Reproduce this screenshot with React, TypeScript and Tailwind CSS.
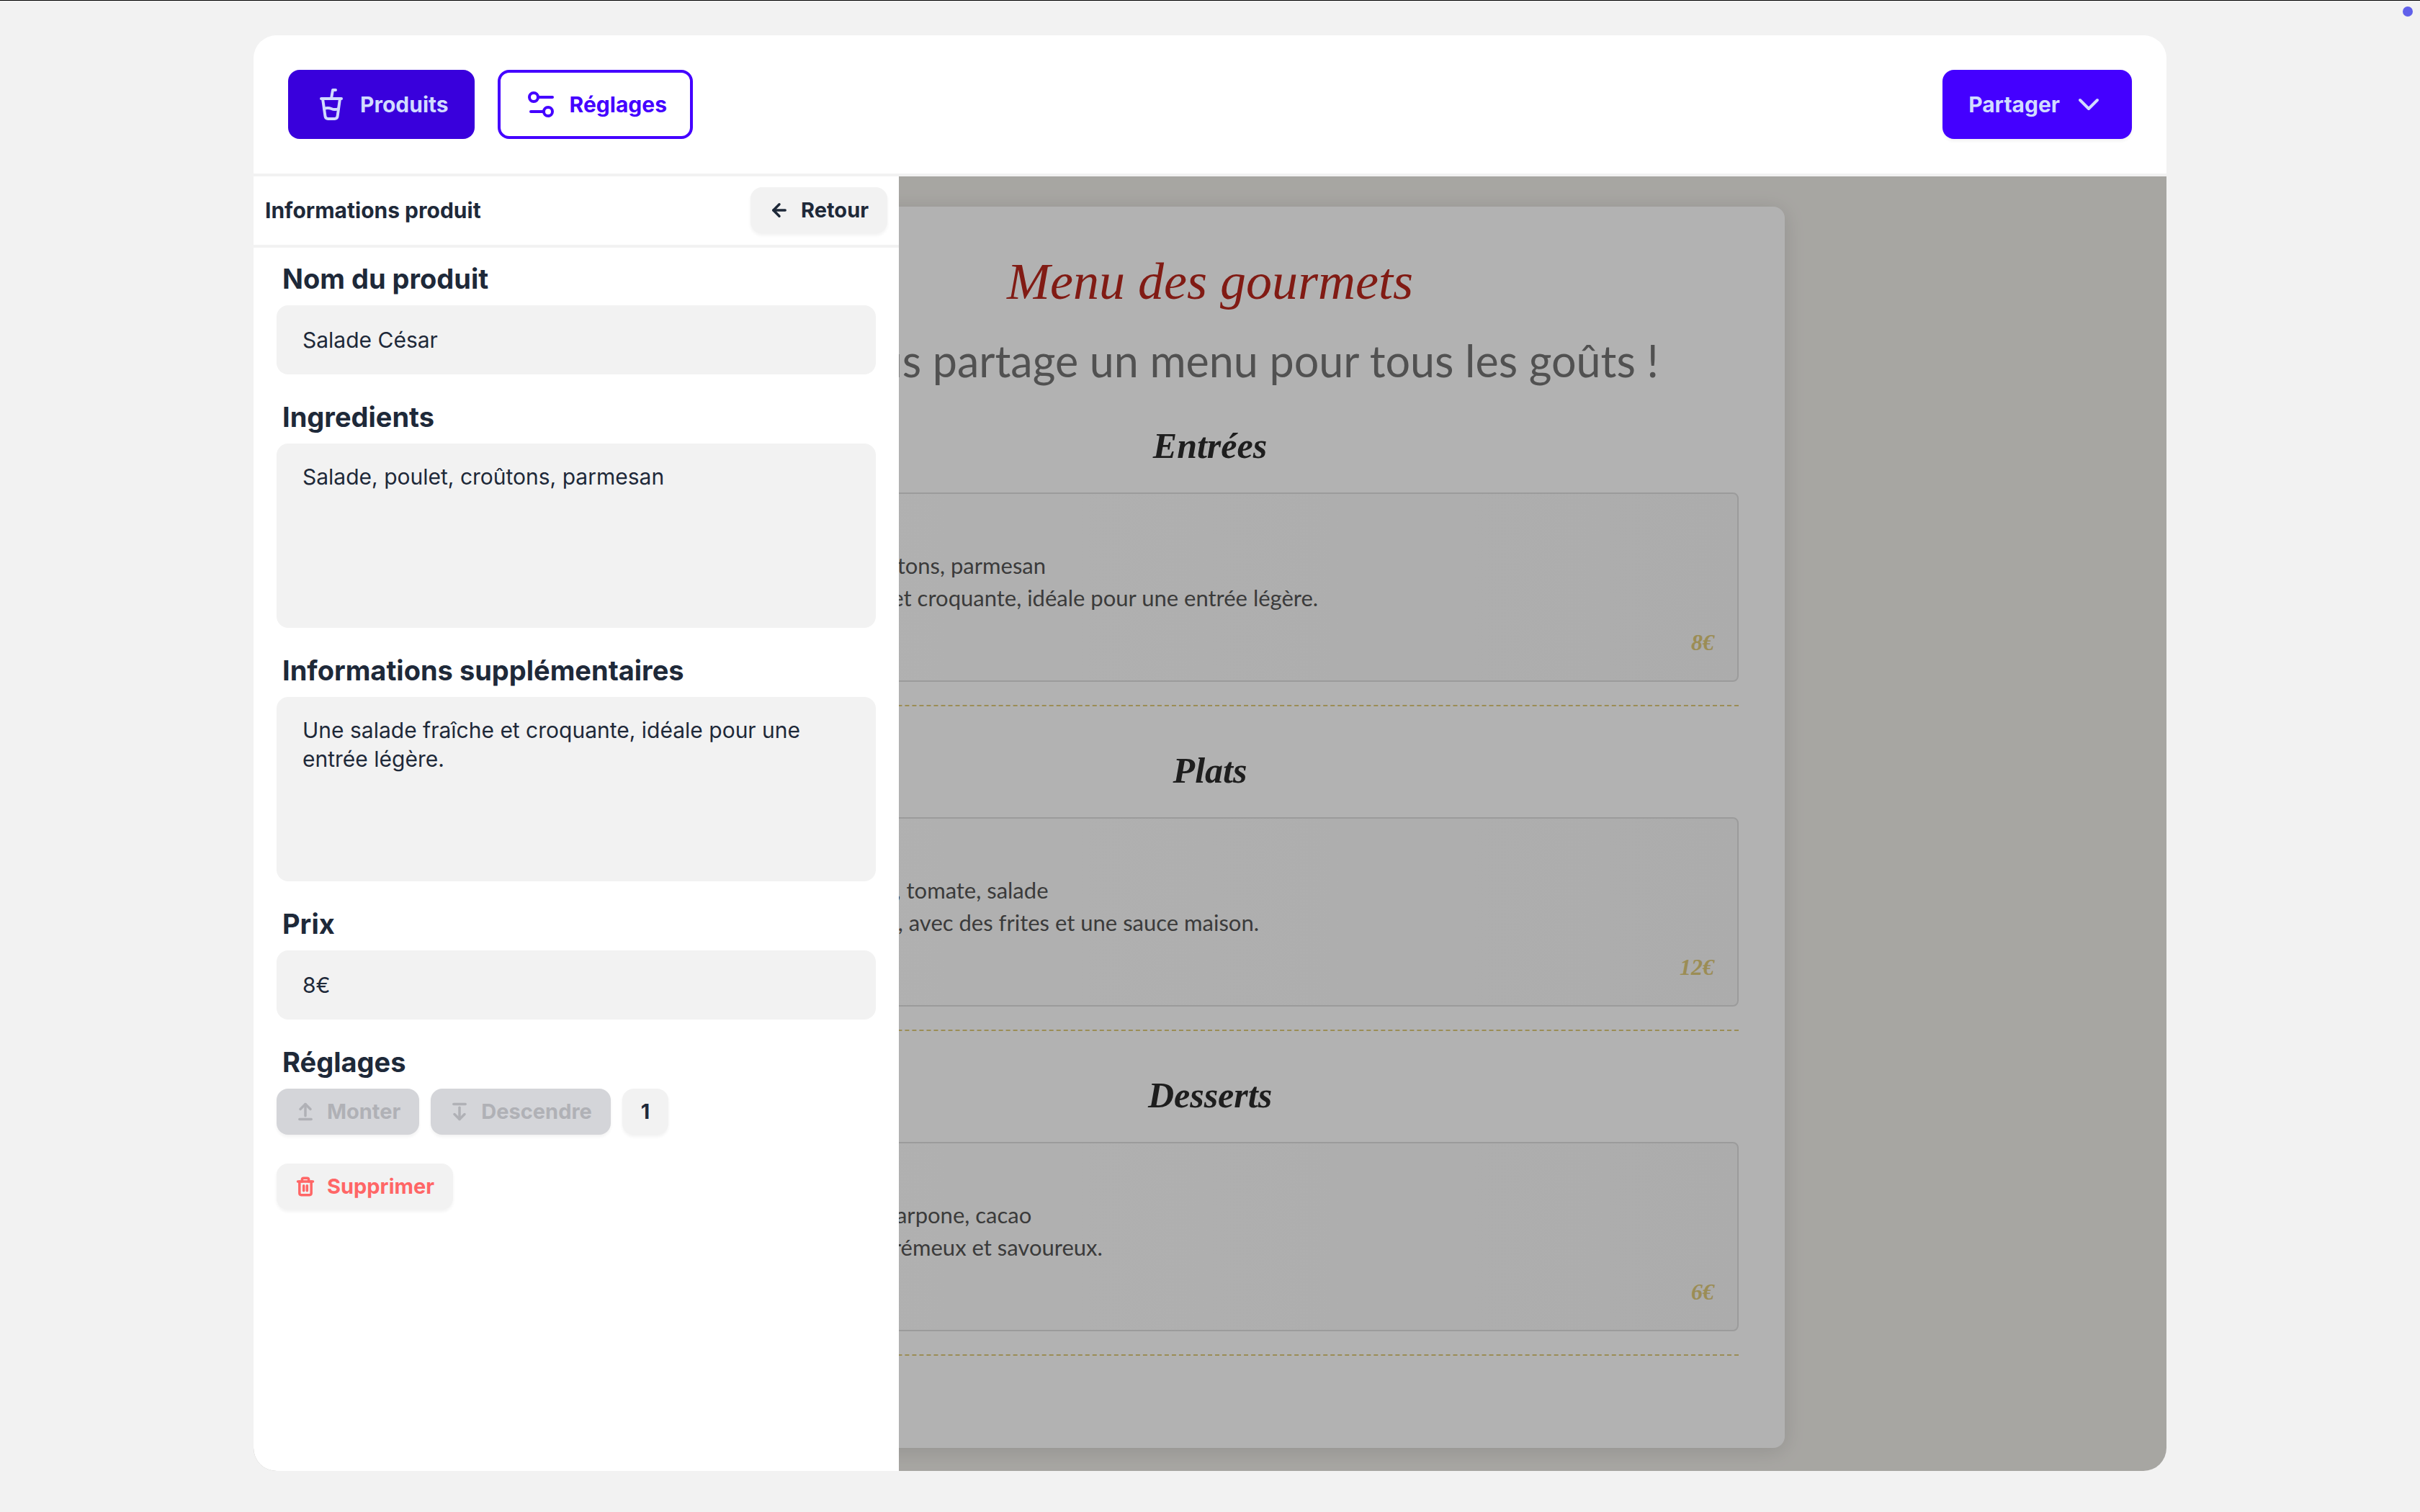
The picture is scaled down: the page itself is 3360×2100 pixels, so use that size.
import { useState } from 'react'
import type { ReactNode } from 'react'
import { ArrowDownFromLine, ArrowLeft, ArrowUpFromLine, ChevronDown, CupSoda, Trash2 } from 'lucide-react'

interface Product {
  name: string
  ingredients: string
  info: string
  price: string
}

interface Section {
  title: string
  product: Product
}

const sections: Section[] = [
  {
    title: 'Entrées',
    product: {
      name: 'Salade César',
      ingredients: 'Salade, poulet, croûtons, parmesan',
      info: 'Une salade fraîche et croquante, idéale pour une entrée légère.',
      price: '8€',
    },
  },
  {
    title: 'Plats',
    product: {
      name: 'Burger Maison',
      ingredients: 'Steak haché, comté, tomate, salade',
      info: 'Un burger classique, avec des frites et une sauce maison.',
      price: '12€',
    },
  },
  {
    title: 'Desserts',
    product: {
      name: 'Tiramisu',
      ingredients: 'Café, biscuits, mascarpone, cacao',
      info: 'Un dessert italien crémeux et savoureux.',
      price: '6€',
    },
  },
]

function SlidersIcon() {
  return (
    <svg
      viewBox="0 0 24 24"
      fill="none"
      stroke="currentColor"
      strokeWidth={2}
      strokeLinecap="round"
      className="size-12"
    >
      <path d="M20 7H10" />
      <path d="M14 17H5" />
      <circle cx="17" cy="17" r="3" />
      <circle cx="7" cy="7" r="3" />
    </svg>
  )
}

interface SmallButtonProps {
  icon?: ReactNode
  danger?: boolean
  disabled?: boolean
  children: ReactNode
}

function SmallButton({ icon, danger, disabled, children }: SmallButtonProps) {
  const color = disabled
    ? 'bg-[#d4d5d9] text-[#b0b1b6]'
    : danger
      ? 'bg-[#f2f2f2] text-[#ff6666]'
      : 'bg-[#f2f2f2] text-gray-800'

  return (
    <button
      type="button"
      disabled={disabled}
      className={`flex h-16 items-center gap-4 rounded-2xl px-[26px] text-[29px] font-bold shadow-[0_3px_4px_rgba(0,0,0,0.05)] ${color}`}
    >
      {icon}
      {children}
    </button>
  )
}

interface FieldProps {
  id: string
  label: string
  value: string
  multiline?: boolean
  onChange: (value: string) => void
}

function Field({ id, label, value, multiline, onChange }: FieldProps) {
  return (
    <div className="flex flex-col gap-2.5">
      <label htmlFor={id} className="px-2 text-[38px] leading-[54px] font-bold">
        {label}
      </label>
      {multiline ? (
        <textarea
          id={id}
          value={value}
          onChange={e => onChange(e.target.value)}
          className="h-64 resize-none rounded-2xl bg-[#f2f2f2] px-9 py-[26px] leading-10"
        />
      ) : (
        <input
          id={id}
          type="text"
          value={value}
          onChange={e => onChange(e.target.value)}
          className="h-24 rounded-2xl bg-[#f2f2f2] px-9"
        />
      )}
    </div>
  )
}

function ProductDrawer() {
  const [product, setProduct] = useState(sections[0].product)
  const update = (patch: Partial<Product>) => setProduct(p => ({ ...p, ...patch }))

  return (
    <aside className="absolute inset-y-0 left-0 w-[896px] bg-white">
      <div className="flex items-center justify-between border-b-4 border-[#f2f2f2] px-4 pt-[15px] pb-4">
        <h2 className="text-[30px] font-bold">Informations produit</h2>
        <SmallButton icon={<ArrowLeft className="size-7" strokeWidth={3} />}>Retour</SmallButton>
      </div>

      <form className="flex flex-col gap-8 px-8 py-4">
        <Field id="name" label="Nom du produit" value={product.name} onChange={name => update({ name })} />
        <Field
          id="ingredients"
          label="Ingredients"
          multiline
          value={product.ingredients}
          onChange={ingredients => update({ ingredients })}
        />
        <Field
          id="info"
          label="Informations supplémentaires"
          multiline
          value={product.info}
          onChange={info => update({ info })}
        />
        <Field id="price" label="Prix" value={product.price} onChange={price => update({ price })} />

        <div className="flex flex-col gap-2.5">
          <h3 className="px-2 text-[38px] leading-[54px] font-bold">Réglages</h3>
          <div className="flex gap-4">
            <SmallButton disabled icon={<ArrowUpFromLine className="size-7" strokeWidth={3} />}>
              Monter
            </SmallButton>
            <SmallButton disabled icon={<ArrowDownFromLine className="size-7" strokeWidth={3} />}>
              Descendre
            </SmallButton>
            <SmallButton>1</SmallButton>
          </div>
          <div className="flex pt-[30px]">
            <SmallButton danger icon={<Trash2 className="size-7" strokeWidth={3} />}>
              Supprimer
            </SmallButton>
          </div>
        </div>
      </form>
    </aside>
  )
}

function MenuSection({ title, product }: Section) {
  return (
    <section className="border-b-2 border-dashed border-[#dfca7a] pb-8">
      <h2 className="mb-2 text-center font-['Liberation_Serif',serif] text-[50px] leading-[114px] font-bold text-[#2b2b2b] italic">
        {title}
      </h2>
      <article className="rounded-lg border-2 border-[#dfdfdf] bg-linear-to-r from-white to-[#f7f7f7] p-8 text-[31px] text-[#555555]">
        <h3 className="leading-[45px] font-bold">{product.name}</h3>
        <p className="leading-[45px]">{product.ingredients}</p>
        <p className="leading-[45px]">{product.info}</p>
        <p className="mt-[18px] text-right font-['Liberation_Serif',serif] text-[32px] leading-[42px] font-bold text-[#dfca7a] italic">
          {product.price}
        </p>
      </article>
    </section>
  )
}

function MenuPreview() {
  return (
    <div className="bg-[#f0eee9] pt-[42px] pb-8 font-[Lato,sans-serif]">
      <div className="mx-auto max-w-[1596px] rounded-2xl bg-white px-16 pt-10 pb-32 shadow-[0_4px_30px_rgba(0,0,0,0.12)]">
        <header className="pb-4 text-center">
          <h1 className="font-['Liberation_Serif',serif] text-[72px] leading-[129px] text-[#b9281d] italic">
            Menu des gourmets
          </h1>
          <p className="text-[61px] leading-[90px] text-[#757575]">
            On vous partage un menu pour tous les goûts !
          </p>
        </header>
        <div className="flex flex-col gap-8">
          {sections.map(section => (
            <MenuSection key={section.title} {...section} />
          ))}
        </div>
      </div>
    </div>
  )
}

export default function App() {
  return (
    <div className="relative min-h-screen border-t border-black bg-[#f2f2f2] px-6 pt-12 pb-14 font-[Inter,sans-serif] text-[30px] leading-10 text-gray-800">
      <span className="absolute top-2 right-2.5 size-3.5 rounded-full bg-[#6060ea]" />

      <div className="mx-auto max-w-[2656px] overflow-hidden rounded-[32px] bg-white">
        <nav className="flex items-center justify-between border-b-4 border-[#f2f2f2] p-12 text-[30px] font-bold">
          <div className="flex gap-8">
            <button
              type="button"
              className="flex h-24 items-center gap-4 rounded-2xl bg-[#3900dc] px-9 text-[#d1dbff]"
            >
              <CupSoda className="size-12" />
              Produits
            </button>
            <button
              type="button"
              className="flex h-24 items-center gap-4 rounded-2xl border-4 border-[#4400ff] px-8 text-[#4400ff]"
            >
              <SlidersIcon />
              Réglages
            </button>
          </div>
          <button
            type="button"
            className="flex h-24 items-center gap-4 rounded-2xl bg-[#4400ff] px-9 text-[#d1dbff] shadow-[0_3px_4px_rgba(0,0,0,0.05)]"
          >
            Partager
            <ChevronDown className="size-12" />
          </button>
        </nav>

        <main className="relative">
          <MenuPreview />
          <div className="absolute inset-0 bg-black/30" />
          <ProductDrawer />
        </main>
      </div>
    </div>
  )
}
